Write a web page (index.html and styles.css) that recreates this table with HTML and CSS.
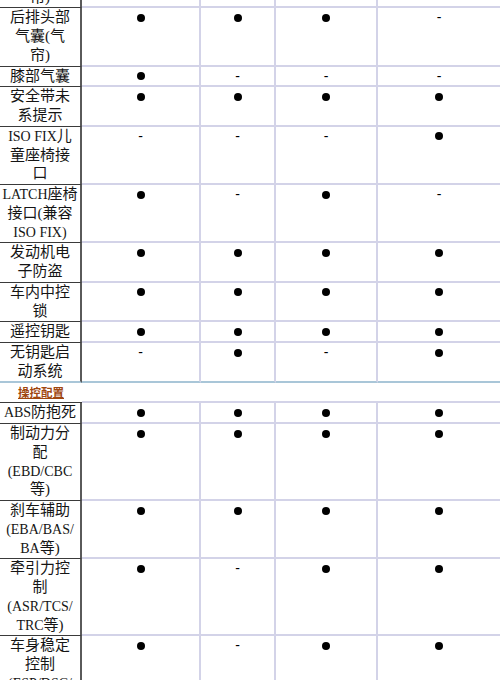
FILE: index.html
```html
<!DOCTYPE html>
<html lang="zh-CN">
<head>
<meta charset="utf-8">
<title>安全与操控配置</title>
<link rel="stylesheet" href="styles.css">
</head>
<body>
<table class="spec">
  <colgroup>
    <col class="c-name"><col class="c1"><col class="c2"><col class="c3"><col class="c4">
  </colgroup>
  <tbody>
    <tr>
      <td class="name">前排头部<br>气囊(气<br>帘)</td>
      <td><span class="dot"></span></td><td><span class="dot"></span></td><td><span class="dot"></span></td><td><span class="dot"></span></td>
    </tr>
    <tr>
      <td class="name">后排头部<br>气囊(气<br>帘)</td>
      <td><span class="dot"></span></td><td><span class="dot"></span></td><td><span class="dot"></span></td><td>-</td>
    </tr>
    <tr>
      <td class="name">膝部气囊</td>
      <td><span class="dot"></span></td><td>-</td><td>-</td><td>-</td>
    </tr>
    <tr>
      <td class="name">安全带未<br>系提示</td>
      <td><span class="dot"></span></td><td><span class="dot"></span></td><td><span class="dot"></span></td><td><span class="dot"></span></td>
    </tr>
    <tr>
      <td class="name"><span class="en">ISO FIX</span>儿<br>童座椅接<br>口</td>
      <td>-</td><td>-</td><td>-</td><td><span class="dot"></span></td>
    </tr>
    <tr>
      <td class="name"><span class="en">LATCH</span>座椅<br>接口(兼容<br><span class="en">ISO FIX)</span></td>
      <td><span class="dot"></span></td><td>-</td><td><span class="dot"></span></td><td>-</td>
    </tr>
    <tr>
      <td class="name">发动机电<br>子防盗</td>
      <td><span class="dot"></span></td><td><span class="dot"></span></td><td><span class="dot"></span></td><td><span class="dot"></span></td>
    </tr>
    <tr>
      <td class="name">车内中控<br>锁</td>
      <td><span class="dot"></span></td><td><span class="dot"></span></td><td><span class="dot"></span></td><td><span class="dot"></span></td>
    </tr>
    <tr>
      <td class="name">遥控钥匙</td>
      <td><span class="dot"></span></td><td><span class="dot"></span></td><td><span class="dot"></span></td><td><span class="dot"></span></td>
    </tr>
    <tr class="pre-sect">
      <td class="name">无钥匙启<br>动系统</td>
      <td>-</td><td><span class="dot"></span></td><td>-</td><td><span class="dot"></span></td>
    </tr>
    <tr class="sect">
      <td class="name"><span class="sect-title">操控配置</span></td>
      <td colspan="4"></td>
    </tr>
    <tr>
      <td class="name"><span class="en">ABS</span>防抱死</td>
      <td><span class="dot"></span></td><td><span class="dot"></span></td><td><span class="dot"></span></td><td><span class="dot"></span></td>
    </tr>
    <tr>
      <td class="name">制动力分<br>配<br><span class="en">(EBD/CBC</span><br>等)</td>
      <td><span class="dot"></span></td><td><span class="dot"></span></td><td><span class="dot"></span></td><td><span class="dot"></span></td>
    </tr>
    <tr>
      <td class="name">刹车辅助<br><span class="en">(EBA/BAS/</span><br><span class="en">BA</span>等)</td>
      <td><span class="dot"></span></td><td><span class="dot"></span></td><td><span class="dot"></span></td><td><span class="dot"></span></td>
    </tr>
    <tr>
      <td class="name">牵引力控<br>制<br><span class="en">(ASR/TCS/</span><br><span class="en">TRC</span>等)</td>
      <td><span class="dot"></span></td><td>-</td><td><span class="dot"></span></td><td><span class="dot"></span></td>
    </tr>
    <tr>
      <td class="name">车身稳定<br>控制<br><span class="en">(ESP/DSC/</span><br><span class="en">VSC</span>等)</td>
      <td><span class="dot"></span></td><td>-</td><td><span class="dot"></span></td><td><span class="dot"></span></td>
    </tr>
  </tbody>
</table>
</body>
</html>
```

FILE: styles.css
```css
html, body {
  margin: 0;
  padding: 0;
  background: #ffffff;
  overflow: hidden;
}

.spec {
  border-collapse: separate;
  border-spacing: 0;
  table-layout: fixed;
  width: 500px;
  margin-top: -50px;
  font-family: "Liberation Serif", "Noto Sans CJK SC", serif;
  font-size: 15px;
  line-height: 18.75px;
  color: #151515;
}

.c-name { width: 82px; }
.c1 { width: 119px; }
.c2 { width: 75px; }
.c3 { width: 102px; }
.c4 { width: 122px; }

.spec td {
  padding: 0;
  vertical-align: top;
  text-align: center;
  font-family: "Liberation Sans", sans-serif;
  font-size: 14px;
  color: #000;
  border-bottom: 2px solid #d3d3e8;
  border-right: 2px solid #d3d3e8;
}

.spec td:last-child {
  border-right: none;
}

.spec td.name {
  font-family: "Liberation Serif", "Noto Sans CJK SC", serif;
  font-size: 15px;
  color: #151515;
  white-space: nowrap;
  border-right: 2px solid #5a5a5a;
  border-bottom: 1px solid #3a3a3a;
  padding-bottom: 1px;
}

.en {
  font-family: "Liberation Serif", serif;
  font-size: 14px;
  line-height: 1;
}

.dot {
  display: block;
  width: 8px;
  height: 8px;
  margin: 5.5px auto 0;
  border-radius: 50%;
  background: #000;
}

.pre-sect td,
.pre-sect td.name {
  border-bottom: 2px solid #a9c6d8;
  padding-bottom: 0;
}

.sect td,
.sect td.name {
  border-right: none;
}

.sect-title {
  font-family: "Noto Sans CJK SC", sans-serif;
  font-size: 11.5px;
  font-weight: bold;
  line-height: 1;
  color: #a0460f;
  text-decoration: underline;
}
```
